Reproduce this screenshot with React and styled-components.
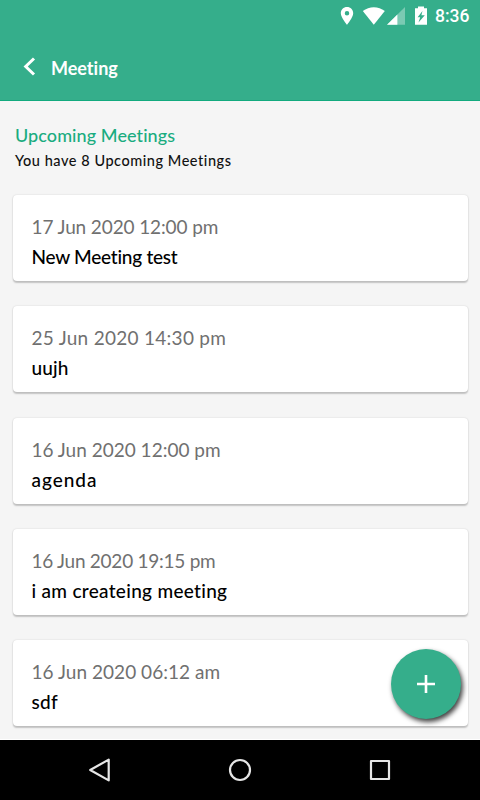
import React from "react";
import styled, { createGlobalStyle } from "styled-components";

const meetings = [
  { date: "17 Jun 2020 12:00 pm", title: "New Meeting test", dateGap: -0.12, titleGap: -0.25 },
  { date: "25 Jun 2020 14:30 pm", title: "uujh", dateGap: 0.28, titleGap: 0.1 },
  { date: "16 Jun 2020 12:00 pm", title: "agenda", dateGap: 0, titleGap: 0.95 },
  { date: "16 Jun 2020 19:15 pm", title: "i am createing meeting", dateGap: -0.26, titleGap: 0.3 },
  { date: "16 Jun 2020 06:12 am", title: "sdf", dateGap: 0.04, titleGap: 0.3 },
];

const App = () => {
  return (
    <Screen>
      <GlobalStyle />
      <Header>
        <StatusBar>
          <StatusIcons />
          <Clock>8:36</Clock>
        </StatusBar>
        <Toolbar>
          <BackButton aria-label="Back">
            <svg width="14" height="20" viewBox="0 0 14 20">
              <path d="M12 1.500 3.700 9.500l8.300 8" fill="none" stroke="#fff" strokeWidth="3" />
            </svg>
          </BackButton>
          <PageTitle>Meeting</PageTitle>
        </Toolbar>
      </Header>

      <Content>
        <Heading>Upcoming Meetings</Heading>
        <Summary>You have 8 Upcoming Meetings</Summary>
        <List>
          {meetings.map((meeting, i) => (
            <Card key={i}>
              <MeetingDate $gap={meeting.dateGap}>{meeting.date}</MeetingDate>
              <MeetingTitle $gap={meeting.titleGap}>{meeting.title}</MeetingTitle>
            </Card>
          ))}
        </List>
        <AddButton aria-label="Add meeting">
          <svg width="18" height="18" viewBox="0 0 18 18">
            <path d="M9 0v18M0 9h18" stroke="#fff" strokeWidth="2.6" />
          </svg>
        </AddButton>
      </Content>

      <NavBar>
        <NavButton aria-label="Back">
          <svg width="24" height="26" viewBox="0 0 24 26">
            <path d="M20.700 2.600v20.800L2.200 13z" {...navStroke} />
          </svg>
        </NavButton>
        <NavButton aria-label="Home">
          <svg width="24" height="26" viewBox="0 0 24 26">
            <circle cx="12" cy="13" r="10" {...navStroke} />
          </svg>
        </NavButton>
        <NavButton aria-label="Recent apps">
          <svg width="24" height="26" viewBox="0 0 24 26">
            <rect x="3" y="4" width="18" height="18" {...navStroke} />
          </svg>
        </NavButton>
      </NavBar>
    </Screen>
  );
};

const navStroke = {
  fill: "none",
  stroke: "#e6e6e6",
  strokeWidth: 2.2,
  strokeLinejoin: "round",
};

// Location, wifi, signal and charging battery
const StatusIcons = () => (
  <svg width="90" height="20" viewBox="0 0 90 20">
    <path
      fill="#fff"
      fillRule="evenodd"
      d="M7 1C3.500 1 .8 3.700 .8 7.200 .8 11.500 7 18.700 7 18.700s6.200-7.200 6.200-11.500C13.200 3.700 10.500 1 7 1zm0 4a2.250 2.250 0 1 1 0 4.500A2.250 2.250 0 0 1 7 5z"
    />
    <path fill="#fff" d="M22.800 5.100C29.200-.2 38.500-.2 44.800 5.100L33.800 18.800z" />
    <path fill="#fff" fillOpacity=".35" d="M65 1v17.800H47z" />
    <path fill="#fff" d="M57.400 8.500v10.300H47z" />
    <path
      fill="#fff"
      fillRule="evenodd"
      d="M78 .5h6v1.800h3v16.500H75V2.300h3zM82.500 5 77.600 11.200h2.600l-1.700 5.300 6.300-7.300h-3.400z"
    />
  </svg>
);

const GlobalStyle = createGlobalStyle`
  * {
    box-sizing: border-box;
    margin: 0;
    padding: 0;
  }
  body {
    font-family: "Lato", sans-serif;
    font-variant-ligatures: none;
    background: #f5f5f5;
  }
  button {
    border: none;
    background: none;
    display: flex;
    align-items: center;
    justify-content: center;
  }
  svg {
    display: block;
  }
`;

const Screen = styled.div`
  width: 480px;
  height: 800px;
  display: flex;
  flex-direction: column;
  overflow: hidden;
  background: #f5f5f5;
`;

const Header = styled.header`
  height: 101px;
  flex: none;
  background: #35ae8b;
  border-bottom: 1px solid #12aa7e;
`;

const StatusBar = styled.div`
  height: 34px;
  padding: 6px 10px 0 0;
  display: flex;
  justify-content: flex-end;
  align-items: flex-start;
`;

const Clock = styled.span`
  width: 35px;
  margin-left: 5px;
  font-family: "Roboto", sans-serif;
  font-size: 17.5px;
  font-weight: 500;
  line-height: 21px;
  color: #fff;
`;

const Toolbar = styled.div`
  height: 66px;
  padding-left: 22px;
  display: flex;
  align-items: center;
`;

const BackButton = styled.button`
  width: 14px;
  height: 20px;
`;

const PageTitle = styled.h1`
  margin: 1px 0 0 15px;
  font-size: 18px;
  font-weight: 700;
  line-height: 24px;
  color: #fff;
`;

const Content = styled.main`
  position: relative;
  flex: 1;
  min-height: 0;
  padding: 22px 12px 0;
  border-bottom: 1px solid #fff;
`;

const Heading = styled.h2`
  padding-left: 3px;
  font-size: 18px;
  font-weight: 500;
  line-height: 25px;
  letter-spacing: 0.08px;
  color: #1aac80;
`;

const Summary = styled.p`
  padding-left: 3px;
  font-size: 14.5px;
  font-weight: 500;
  line-height: 25px;
  letter-spacing: 0.54px;
  color: #111;
`;

const List = styled.section`
  margin-top: 22px;
  display: grid;
  gap: 25.250px;
`;

const Card = styled.article`
  height: 86px;
  padding: 17px 19px 0;
  border-radius: 4px;
  margin: 0 0.500px;
  background: #fff;
  box-shadow: 0 1.500px 1.500px rgba(0, 0, 0, 0.2), 0 0 2px rgba(0, 0, 0, 0.12);
`;

const MeetingDate = styled.p`
  width: max-content;
  font-size: 19px;
  font-weight: 400;
  line-height: 29px;
  letter-spacing: ${({ $gap }) => $gap}px;
  color: #707070;
`;

const MeetingTitle = styled.h3`
  width: max-content;
  font-size: 19px;
  font-weight: 500;
  line-height: 31px;
  letter-spacing: ${({ $gap }) => $gap}px;
  color: #000;
`;

// Floats over the list
const AddButton = styled.button`
  position: absolute;
  right: 19px;
  bottom: 20px;
  width: 70px;
  height: 70px;
  border-radius: 50%;
  background: #35ae8b;
  box-shadow: 2px 3px 5px rgba(0, 0, 0, 0.75);
`;

const NavBar = styled.nav`
  height: 60px;
  flex: none;
  padding: 0 30px;
  display: grid;
  grid-template-columns: repeat(3, 1fr);
  background: #000;
`;

const NavButton = styled.button`
  height: 60px;
`;

export default App;
